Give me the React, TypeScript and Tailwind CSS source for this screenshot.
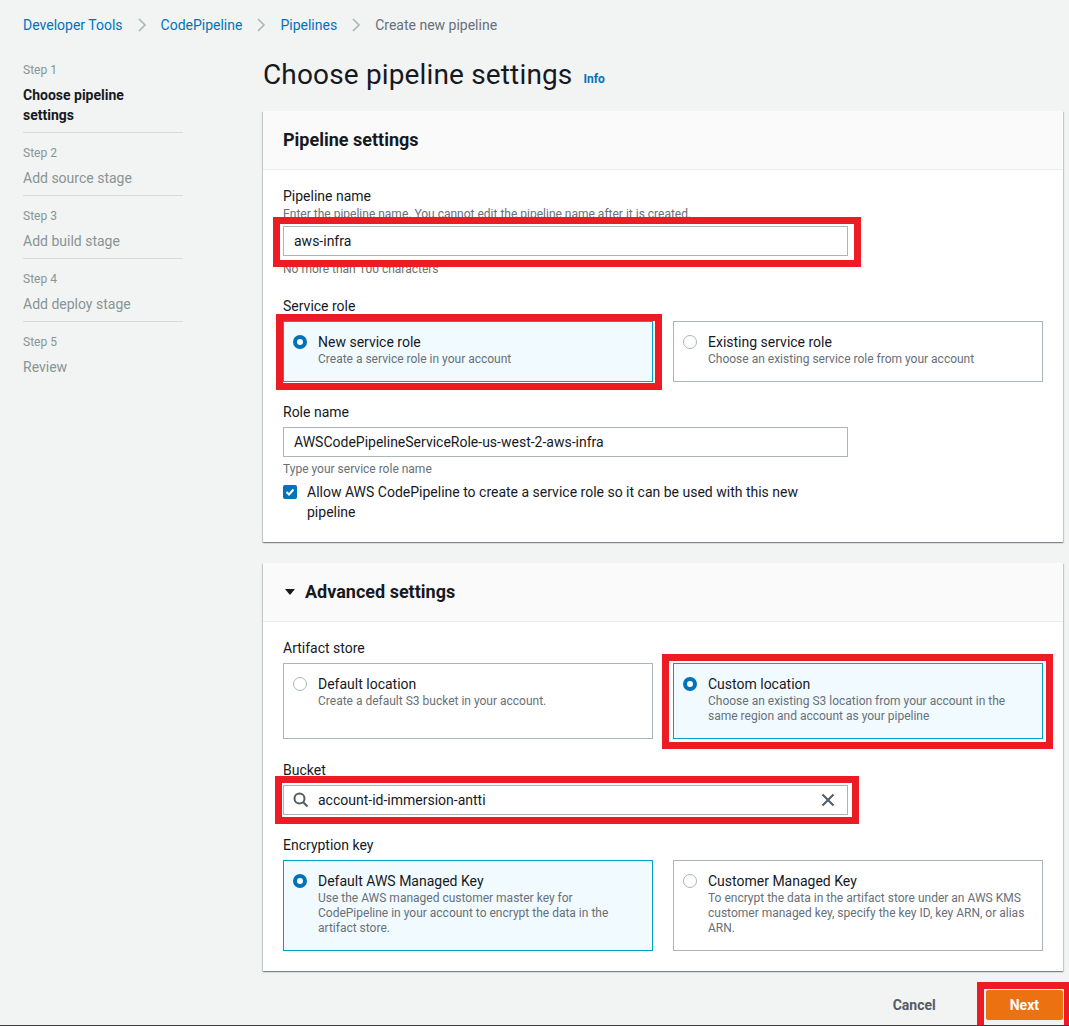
import React from 'react'

const steps = [
  { step: 'Step 1', label: 'Choose pipeline settings', active: true },
  { step: 'Step 2', label: 'Add source stage' },
  { step: 'Step 3', label: 'Add build stage' },
  { step: 'Step 4', label: 'Add deploy stage' },
  { step: 'Step 5', label: 'Review' },
]

function Chevron() {
  return (
    <svg width="10" height="16" viewBox="0 0 10 16" className="mx-[14px]">
      <polyline points="2,2 8,8 2,14" fill="none" stroke="#aab7b8" strokeWidth="1.6" />
    </svg>
  )
}

// red annotation box drawn over a control
function Mark({ className }: { className: string }) {
  return <span className={`pointer-events-none absolute border-[7px] border-[#ed1c24] ${className}`} />
}

function Radio({ on }: { on?: boolean }) {
  return on ? (
    <span className="mt-[3px] block h-[14px] w-[14px] shrink-0 rounded-full border-[4px] border-[#0073bb] bg-white" />
  ) : (
    <span className="mt-[3px] block h-[14px] w-[14px] shrink-0 rounded-full border border-[#aab7b8] bg-white" />
  )
}

function Tile({ on, title, desc }: { on?: boolean; title: string; desc: string }) {
  return (
    <div
      className={`flex h-full gap-[11px] border pl-[9px] pr-[14px] pt-[10px] pb-[14px] ${
        on ? 'border-[#00a1c9] bg-[#f1faff]' : 'border-[#aab7b8] bg-white'
      }`}
    >
      <Radio on={on} />
      <div>
        <div className="text-[14px] leading-[20px] text-[#16191f]">{title}</div>
        <div className="text-[12px] leading-[15px] text-[#687078]">{desc}</div>
      </div>
    </div>
  )
}

function Label({ children }: { children: React.ReactNode }) {
  return <div className="text-[14px] leading-[20px] text-[#16191f]">{children}</div>
}

function Panel({ header, children }: { header: React.ReactNode; children: React.ReactNode }) {
  return (
    <div className="bg-white shadow-[0_1px_1px_0_rgba(0,28,36,0.3),1px_1px_1px_0_rgba(0,28,36,0.15),-1px_1px_1px_0_rgba(0,28,36,0.15)]">
      <div className="border-b border-[#eaeded] bg-[#fafafa] px-[20px] py-[18px] text-[18px] font-bold leading-[22px] text-[#16191f]">
        {header}
      </div>
      <div className="px-[20px] pt-[16px] pb-[20px]">{children}</div>
    </div>
  )
}

export default function App() {
  return (
    <div
      className="h-[1026px] overflow-hidden border-b border-[#3d3d3d] bg-[#f2f3f3] pl-[23px]"
      style={{ fontFamily: 'Roboto, "Noto Sans", sans-serif' }}
    >
      <nav className="flex items-center pt-[15px] text-[14px] leading-[20px]">
        <span className="text-[#0073bb]">Developer Tools</span>
        <Chevron />
        <span className="text-[#0073bb]">CodePipeline</span>
        <Chevron />
        <span className="text-[#0073bb]">Pipelines</span>
        <Chevron />
        <span className="text-[#687078]">Create new pipeline</span>
      </nav>

      <div className="mt-[22px] flex">
        <aside className="w-[160px] shrink-0 pt-[5px]">
          {steps.map((s, i) => (
            <div key={s.step} className={`border-b border-[#d5dbdb] pb-[7px] ${i === 0 ? '' : 'pt-[12px]'} ${i === steps.length - 1 ? 'border-b-0' : ''}`}>
              <div className="text-[12px] leading-[16px] text-[#879596]">{s.step}</div>
              <div
                className={`mt-[7px] w-[140px] text-[14px] leading-[20px] ${
                  s.active ? 'font-bold text-[#16191f]' : 'text-[#879596]'
                }`}
              >
                {s.label}
              </div>
            </div>
          ))}
        </aside>

        <main className="ml-[80px] w-[800px] shrink-0">
          <div className="flex items-center h-[36px]">
            <h1 className="text-[28px] leading-[36px] font-normal tracking-[0.15px] text-[#16191f]">Choose pipeline settings</h1>
            <span className="ml-[11px] mt-[8px] text-[12px] font-bold text-[#0073bb]">Info</span>
          </div>

          <div className="mt-[18px]">
            <Panel header="Pipeline settings">
              <Label>Pipeline name</Label>
              <div className="text-[12px] leading-[16px] text-[#687078]">
                Enter the pipeline name. You cannot edit the pipeline name after it is created.
              </div>
              <div className="relative mt-[4px] w-[565px]">
                <div className="flex h-[30px] items-center border border-[#aab7b8] px-[10px] text-[14px] text-[#16191f]">
                  aws-infra
                </div>
                <Mark className="-left-[10px] -right-[13px] -top-[9px] -bottom-[11px]" />
              </div>
              <div className="mt-[5px] text-[12px] leading-[16px] text-[#687078]">No more than 100 characters</div>

              <div className="mt-[19px]">
                <Label>Service role</Label>
              </div>
              <div className="mt-[5px] grid grid-cols-2 gap-[20px]">
                <div className="relative">
                  <Tile on title="New service role" desc="Create a service role in your account" />
                  <Mark className="-left-[7px] -right-[9px] -top-[7px] -bottom-[8px]" />
                </div>
                <Tile title="Existing service role" desc="Choose an existing service role from your account" />
              </div>

              <div className="mt-[20px]">
                <Label>Role name</Label>
              </div>
              <div className="mt-[5px] flex h-[30px] w-[565px] items-center border border-[#aab7b8] px-[10px] text-[14px] text-[#16191f]">
                AWSCodePipelineServiceRole-us-west-2-aws-infra
              </div>
              <div className="mt-[4px] text-[12px] leading-[16px] text-[#687078]">Type your service role name</div>
              <div className="mt-[5px] flex w-[565px] gap-[10px]">
                <span className="mt-[3px] flex h-[14px] w-[14px] shrink-0 items-center justify-center rounded-[2px] bg-[#0073bb]">
                  <svg width="10" height="10" viewBox="0 0 10 10">
                    <polyline points="1.5,5 4,7.5 8.5,2.5" fill="none" stroke="#fff" strokeWidth="2" />
                  </svg>
                </span>
                <span className="w-[520px] text-[14px] leading-[20px] text-[#16191f]">
                  Allow AWS CodePipeline to create a service role so it can be used with this new pipeline
                </span>
              </div>
            </Panel>
          </div>

          <div className="mt-[21px]">
            <Panel
              header={
                <span className="flex items-center">
                  <svg width="12" height="10" viewBox="0 0 12 10" className="mr-[9px] ml-[1px]">
                    <polygon points="1,2 11,2 6,8" fill="#16191f" />
                  </svg>
                  Advanced settings
                </span>
              }
            >
              <Label>Artifact store</Label>
              <div className="mt-[5px] grid grid-cols-2 gap-[20px]">
                <Tile title="Default location" desc="Create a default S3 bucket in your account." />
                <div className="relative">
                  <Tile
                    on
                    title="Custom location"
                    desc="Choose an existing S3 location from your account in the same region and account as your pipeline"
                  />
                  <Mark className="-left-[11px] -right-[10px] -top-[9px] -bottom-[10px]" />
                </div>
              </div>

              <div className="mt-[21px]">
                <Label>Bucket</Label>
              </div>
              <div className="relative mt-[5px] w-[565px]">
                <div className="flex h-[30px] items-center border border-[#aab7b8] pl-[9px] pr-[10px] text-[14px] text-[#16191f]">
                  <svg width="16" height="16" viewBox="0 0 16 16" className="mr-[9px]">
                    <circle cx="6.5" cy="6.5" r="5" fill="none" stroke="#545b64" strokeWidth="2" />
                    <line x1="10.2" y1="10.2" x2="14.5" y2="14.5" stroke="#545b64" strokeWidth="2" />
                  </svg>
                  <span className="flex-1">account-id-immersion-antti</span>
                  <svg width="14" height="14" viewBox="0 0 14 14" className="mr-[2px]">
                    <path d="M1.5 1.5 L12.5 12.5 M12.5 1.5 L1.5 12.5" stroke="#545b64" strokeWidth="2" />
                  </svg>
                </div>
                <Mark className="-left-[8px] -right-[11px] -top-[9px] -bottom-[9px]" />
              </div>

              <div className="mt-[20px]">
                <Label>Encryption key</Label>
              </div>
              <div className="mt-[5px] grid grid-cols-2 gap-[20px]">
                <Tile
                  on
                  title="Default AWS Managed Key"
                  desc="Use the AWS managed customer master key for CodePipeline in your account to encrypt the data in the artifact store."
                />
                <Tile
                  title="Customer Managed Key"
                  desc="To encrypt the data in the artifact store under an AWS KMS customer managed key, specify the key ID, key ARN, or alias ARN."
                />
              </div>
            </Panel>
          </div>

          <div className="mt-[19px] flex items-center justify-end gap-[30px]">
            <button className="h-[30px] px-[20px] text-[14px] font-bold text-[#545b64]">Cancel</button>
            <div className="relative">
              <button className="h-[30px] rounded-[2px] border border-[#ec7211] bg-[#ec7211] px-[23px] text-[14px] font-bold text-white">
                Next
              </button>
              <Mark className="-left-[9px] -right-[8px] -top-[8px] -bottom-[12px]" />
            </div>
          </div>
        </main>
      </div>
    </div>
  )
}
